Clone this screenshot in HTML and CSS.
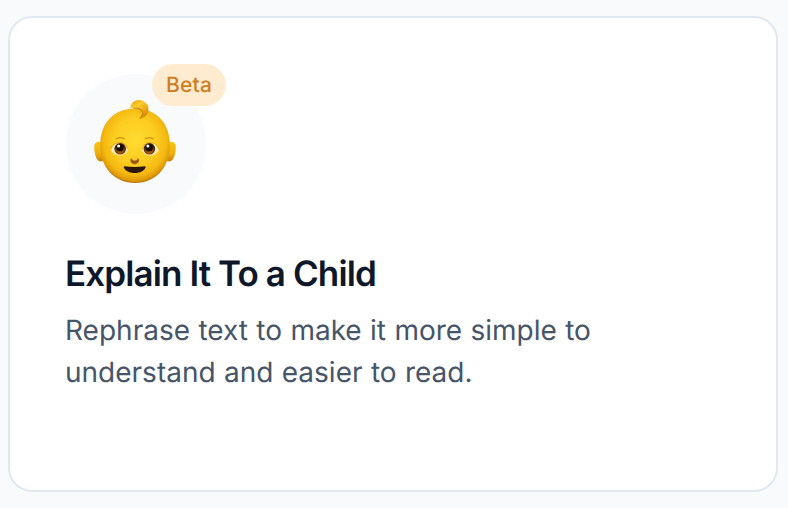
FILE: index.html
```
<!DOCTYPE html>
<html lang="en">
<head>
    <meta charset="UTF-8">
    <title>Explain It To a Child</title>
    <link rel="stylesheet" href="styles.css">
</head>
<body>
    <article class="card">
        <div class="avatar">
            <svg class="baby" viewBox="0 0 100 100" aria-hidden="true">
                <defs>
                    <radialGradient id="skin" cx="50%" cy="44%" r="57%">
                        <stop offset="0" stop-color="#ffdb30"/>
                        <stop offset=".55" stop-color="#fccc20"/>
                        <stop offset=".8" stop-color="#f4b811"/>
                        <stop offset=".93" stop-color="#dd9909"/>
                        <stop offset="1" stop-color="#a86508"/>
                    </radialGradient>
                    <linearGradient id="ear" x1="0" y1="0" x2="0" y2="1">
                        <stop offset="0" stop-color="#f9c414"/>
                        <stop offset=".6" stop-color="#f0b00c"/>
                        <stop offset="1" stop-color="#c88209"/>
                    </linearGradient>
                    <linearGradient id="curl" x1="0" y1="0" x2=".6" y2="1">
                        <stop offset="0" stop-color="#e0a00b"/>
                        <stop offset=".4" stop-color="#fdcc2b"/>
                        <stop offset="1" stop-color="#d98e06"/>
                    </linearGradient>
                    <radialGradient id="iris" cx="50%" cy="65%" r="50%">
                        <stop offset="0" stop-color="#c27a22"/>
                        <stop offset=".6" stop-color="#8a4a0c"/>
                        <stop offset="1" stop-color="#472407"/>
                    </radialGradient>
                </defs>
                <!-- ears -->
                <path fill="url(#ear)" d="M18 50.500c-4-1.500-8.800-1.300-8.800 4.500 0 6.500 2 14.500 6.800 14.500 3 0 4-3 4-7z"/>
                <path fill="url(#ear)" d="M82 50.500c4-1.500 8.800-1.300 8.800 4.500 0 6.500-2 14.500-6.800 14.500-3 0-4-3-4-7z"/>
                <!-- head -->
                <path fill="url(#skin)" d="M50 16.500C29 16.500 15.200 31 15.200 53 15.200 76 30 91 50 91s34.800-15 34.800-38C84.800 31 71 16.500 50 16.500z"/>
                <!-- curl -->
                <path fill="#c37e09" opacity=".6" d="M50 17.500c5-.8 7.500 1.500 7 4-.3 1.800-1.600 3.200-3 4.300 4.600 1.600 9.600-2.500 9.600-8.800 0-2-.4-3.500-1.200-4.800z"/>
                <path fill="url(#curl)" d="M45.300 16.500c.4-5 4-8.400 8.700-8.400 5.600 0 9.300 4.400 8.900 9.700-.3 4.700-3.700 8.200-7.600 8.200 2.800-2.500 3.300-5.800.7-8.300-2.400-2.200-6.300-2.700-10.700-1.200z"/>
                <path class="curl-edge" d="M48.500 16.200c4.800-.6 9 1.700 9.100 5 .1 2.200-1.200 3.900-2.600 5.100"/>
                <!-- brows -->
                <path class="brow" d="M31.300 46.700c2-1 5-1.300 7.900-.2M60.300 46.500c2.900-1.100 5.900-.8 7.900.2"/>
                <!-- eyes -->
                <path fill="#fdeebb" d="M26 58.500c.8-4.600 4-7.600 8.500-7.600s7.700 3.200 8.200 7.900c-2.100 3.300-4.800 4.700-7.900 4.700-3.500 0-6.600-1.800-8.800-5z"/>
                <path fill="#fdeebb" d="M73.700 58.500c-.8-4.600-4-7.600-8.500-7.600s-7.700 3.200-8.200 7.900c2.100 3.300 4.800 4.700 7.900 4.700 3.500 0 6.600-1.800 8.800-5z"/>
                <path class="lid" d="M25.700 56.700c1.500-3.800 4.600-6.100 8.800-6.100 4 0 7 2.400 8 6.200M74 56.700c-1.500-3.800-4.600-6.100-8.800-6.100-4 0-7 2.400-8 6.200"/>
                <circle fill="url(#iris)" cx="35.200" cy="56.800" r="5.800"/>
                <circle fill="url(#iris)" cx="64.400" cy="56.800" r="5.800"/>
                <circle fill="#160b04" cx="35" cy="55.700" r="3.700"/>
                <circle fill="#160b04" cx="64.200" cy="55.700" r="3.700"/>
                <circle fill="#fff" cx="33.600" cy="54" r="1.500"/>
                <circle fill="#fff" cx="62.900" cy="54" r="1.500"/>
                <!-- nose and mouth -->
                <path fill="#9b580a" d="M45.500 67.200c.8-1.200 2-.4 4.200.2 2.200-.6 3.400-1.400 4.200-.2.700 2.600-1.700 5-4.200 5s-4.900-2.400-4.200-5z"/>
                <ellipse fill="#fbc827" cx="49.700" cy="66.200" rx="2.800" ry="2.400"/>
                <path fill="#2a1709" d="M39.500 74.200c6.500.9 14 .9 20.400 0 .9 0 .9.800.7 1.400-1.400 3.400-5.500 5.500-10.800 5.500s-9.500-2.100-11-5.500c-.2-.6-.2-1.400.7-1.400z"/>
            </svg>
            <span class="badge">Beta</span>
        </div>
        <h2 class="title">Explain It To a Child</h2>
        <p class="description">Rephrase text to make it more simple to understand and easier to read.</p>
    </article>
</body>
</html>
```
FILE: styles.css
```
* {
    box-sizing: border-box;
}

body {
    margin: 0;
    padding: 16px 10px 16px 8px;
    background-color: #f8fafc;
    font-family: Inter, "Liberation Sans", sans-serif;
    text-rendering: geometricPrecision;
}

.card {
    height: 476px;
    padding: 56px 56px 56px 55px;
    border: 2px solid #e2e8f0;
    border-radius: 24px;
    background-color: #fff;
}

.avatar {
    position: relative;
    display: flex;
    align-items: center;
    justify-content: center;
    width: 140px;
    height: 140px;
    margin-left: 1px;
    border-radius: 50%;
    background-color: #f8fafc;
}

.baby {
    width: 100px;
    height: 100px;
    margin: -4px 0 0 -2px;
}

.curl-edge {
    fill: none;
    stroke: #bd7a0b;
    stroke-width: 1.1;
    stroke-linecap: round;
    opacity: .7;
}

.brow {
    fill: none;
    stroke: #c58509;
    stroke-width: 1.1;
    stroke-linecap: round;
}

.lid {
    fill: none;
    stroke: #d99a12;
    stroke-width: .8;
}

.badge {
    position: absolute;
    top: -10px;
    left: 86px;
    width: 74px;
    height: 42px;
    border-radius: 21px;
    background-color: #ffebd0;
    color: #cd7f22;
    font-size: 21px;
    font-weight: 500;
    line-height: 44px;
    letter-spacing: .2px;
    text-align: center;
}

.title {
    margin: 36px 0 0;
    color: #0f172a;
    font-size: 35px;
    font-weight: 600;
    line-height: 48px;
    letter-spacing: -.9px;
}

.description {
    max-width: 560px;
    margin: 11px 0 0;
    color: #475569;
    font-size: 28px;
    line-height: 42px;
    word-spacing: .5px;
}
```
